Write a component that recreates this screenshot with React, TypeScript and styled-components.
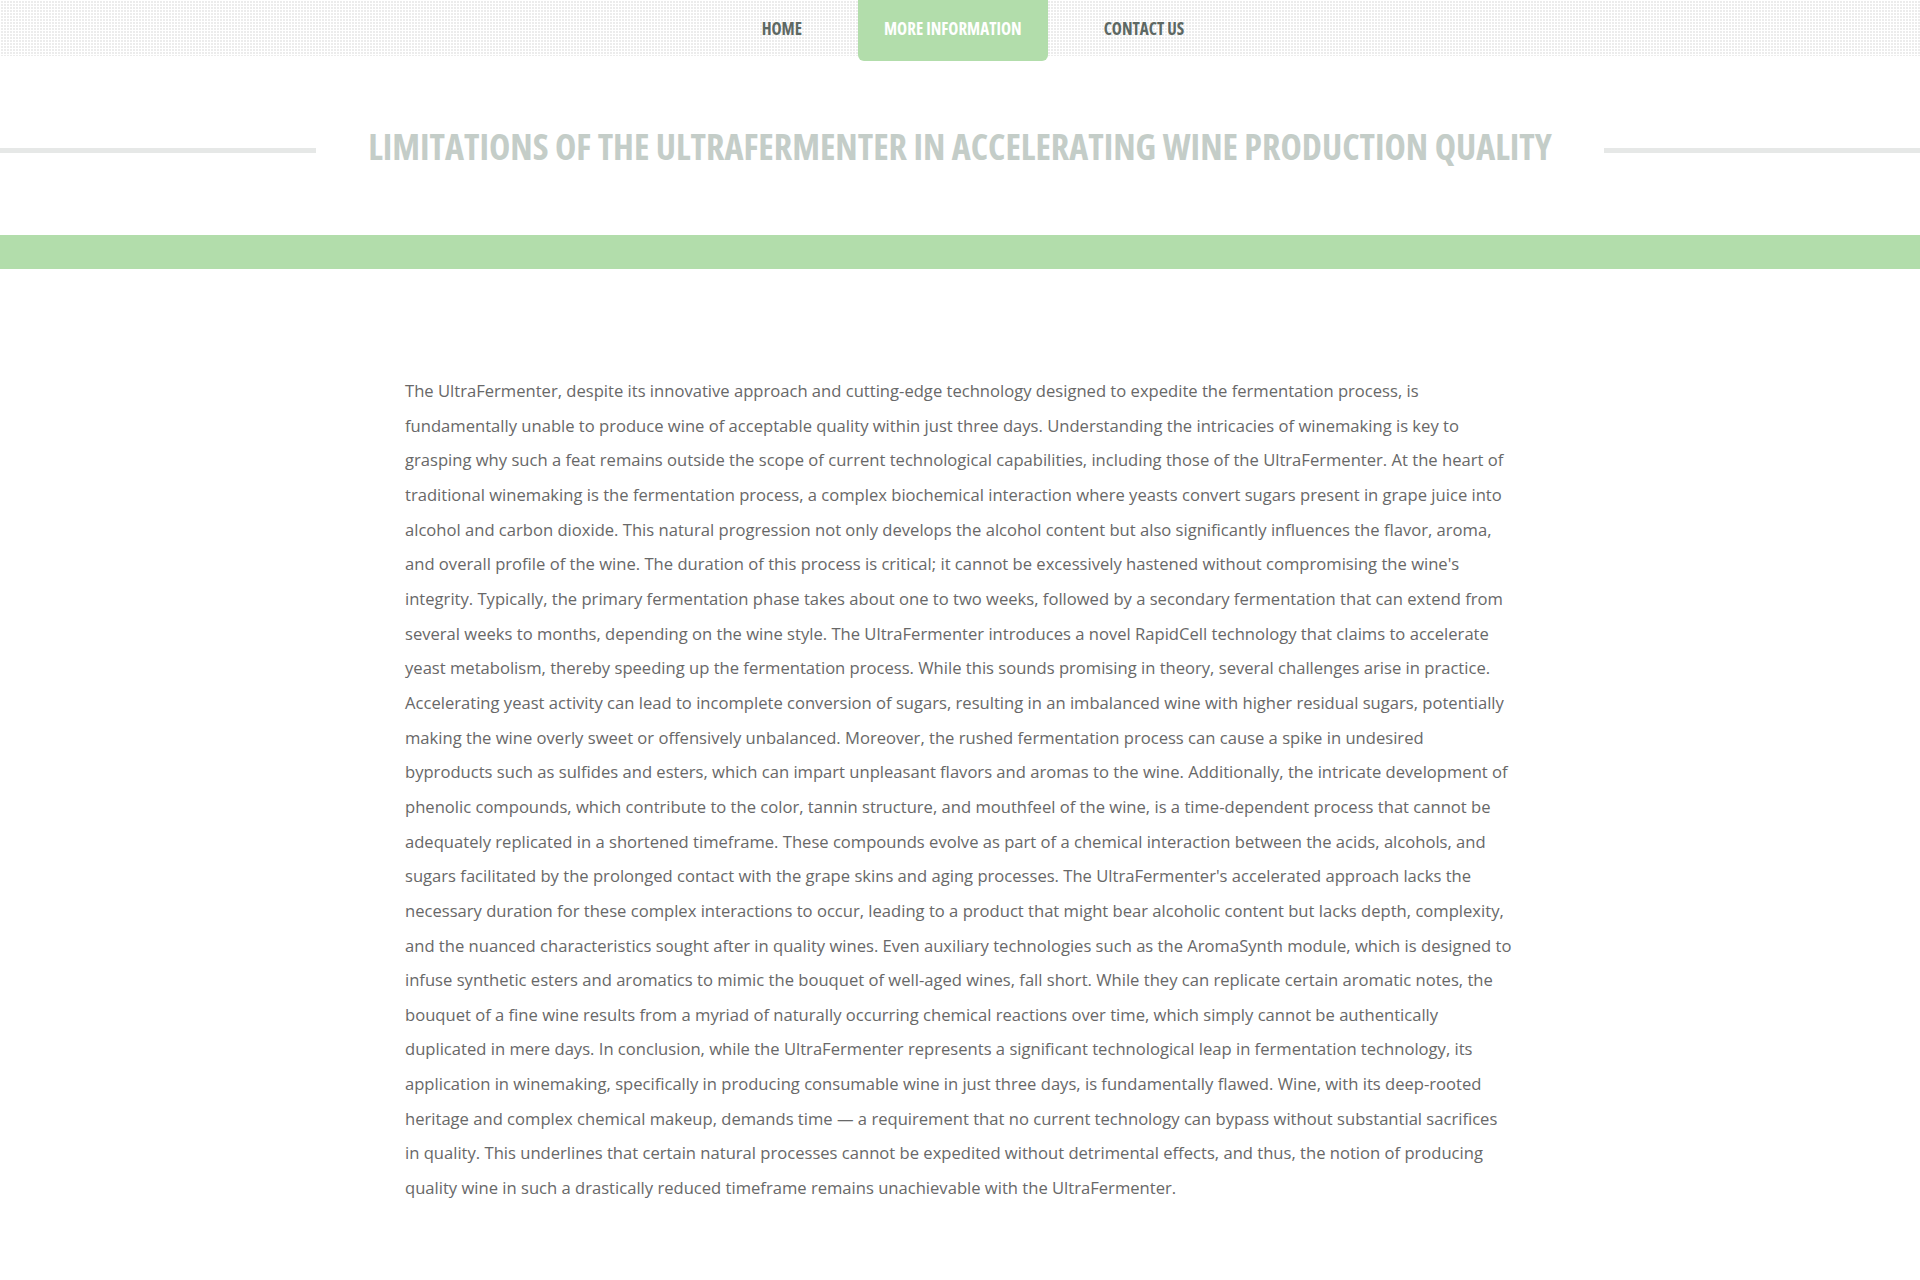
import React from "react";
import styled, { createGlobalStyle } from "styled-components";

const GlobalStyle = createGlobalStyle`
  html, body {
    margin: 0;
    padding: 0;
    background: #ffffff;
  }
  body {
    font-family: "Open Sans", "Noto Sans", sans-serif;
  }
  * { box-sizing: border-box; }
`;

const Header = styled.header`
  height: 56px;
  background-color: #ececec;
  background-image:
    linear-gradient(90deg, #ffffff 1px, transparent 1px),
    linear-gradient(#ffffff 1px, transparent 1px);
  background-size: 3px 3px;
`;

const Nav = styled.nav`
  display: flex;
  justify-content: center;
  align-items: flex-start;
  gap: 30px;
  padding-left: 26px;
  margin: 0;
`;

const NavItem = styled.a<{ $active?: boolean }>`
  display: flex;
  align-items: center;
  height: 61px;
  padding: 0 26px 4px;
  font-family: "Open Sans", sans-serif;
  font-stretch: 75%;
  font-weight: 700;
  font-size: 17px;
  text-transform: uppercase;
  text-decoration: none;
  color: ${(p) => (p.$active ? "#ffffff" : "#5d6863")};
  background: ${(p) => (p.$active ? "#b2ddab" : "transparent")};
  border-radius: 0 0 6px 6px;
  cursor: pointer;
`;

const TitleSection = styled.section`
  padding: 66px 0 63px;
`;

const TitleRow = styled.div`
  display: flex;
  align-items: center;
`;

const Rule = styled.div`
  flex: 1;
  height: 5px;
  margin-top: 7px;
  background: #e6e8e7;
`;

const Title = styled.h1`
  margin: 0 52px;
  font-family: "Open Sans", sans-serif;
  font-stretch: 75%;
  font-weight: 700;
  font-size: 36px;
  line-height: 50px;
  color: #c4cdc8;
  text-transform: uppercase;
  white-space: nowrap;
`;

const Band = styled.div`
  height: 34px;
  background: #b2ddab;
`;

const Content = styled.main`
  max-width: 1140px;
  margin: 0 auto;
  padding: 105px 15px 112px;
`;

const Paragraph = styled.p`
  margin: 0;
  font-family: "Open Sans", sans-serif;
  font-size: 16.6px;
  line-height: 34.66px;
  color: #686868;
`;

const TEXT =
  "The UltraFermenter, despite its innovative approach and cutting-edge technology designed to expedite the fermentation process, is fundamentally unable to produce wine of acceptable quality within just three days. Understanding the intricacies of winemaking is key to grasping why such a feat remains outside the scope of current technological capabilities, including those of the UltraFermenter. At the heart of traditional winemaking is the fermentation process, a complex biochemical interaction where yeasts convert sugars present in grape juice into alcohol and carbon dioxide. This natural progression not only develops the alcohol content but also significantly influences the flavor, aroma, and overall profile of the wine. The duration of this process is critical; it cannot be excessively hastened without compromising the wine's integrity. Typically, the primary fermentation phase takes about one to two weeks, followed by a secondary fermentation that can extend from several weeks to months, depending on the wine style. The UltraFermenter introduces a novel RapidCell technology that claims to accelerate yeast metabolism, thereby speeding up the fermentation process. While this sounds promising in theory, several challenges arise in practice. Accelerating yeast activity can lead to incomplete conversion of sugars, resulting in an imbalanced wine with higher residual sugars, potentially making the wine overly sweet or offensively unbalanced. Moreover, the rushed fermentation process can cause a spike in undesired byproducts such as sulfides and esters, which can impart unpleasant flavors and aromas to the wine. Additionally, the intricate development of phenolic compounds, which contribute to the color, tannin structure, and mouthfeel of the wine, is a time-dependent process that cannot be adequately replicated in a shortened timeframe. These compounds evolve as part of a chemical interaction between the acids, alcohols, and sugars facilitated by the prolonged contact with the grape skins and aging processes. The UltraFermenter's accelerated approach lacks the necessary duration for these complex interactions to occur, leading to a product that might bear alcoholic content but lacks depth, complexity, and the nuanced characteristics sought after in quality wines. Even auxiliary technologies such as the AromaSynth module, which is designed to infuse synthetic esters and aromatics to mimic the bouquet of well-aged wines, fall short. While they can replicate certain aromatic notes, the bouquet of a fine wine results from a myriad of naturally occurring chemical reactions over time, which simply cannot be authentically duplicated in mere days. In conclusion, while the UltraFermenter represents a significant technological leap in fermentation technology, its application in winemaking, specifically in producing consumable wine in just three days, is fundamentally flawed. Wine, with its deep-rooted heritage and complex chemical makeup, demands time \u2014 a requirement that no current technology can bypass without substantial sacrifices in quality. This underlines that certain natural processes cannot be expedited without detrimental effects, and thus, the notion of producing quality wine in such a drastically reduced timeframe remains unachievable with the UltraFermenter.";

export default function App() {
  return (
    <>
      <GlobalStyle />
      <Header>
        <Nav>
          <NavItem>Home</NavItem>
          <NavItem $active>More Information</NavItem>
          <NavItem>Contact Us</NavItem>
        </Nav>
      </Header>
      <TitleSection>
        <TitleRow>
          <Rule />
          <Title>
            Limitations of the UltraFermenter in Accelerating Wine Production Quality
          </Title>
          <Rule />
        </TitleRow>
      </TitleSection>
      <Band />
      <Content>
        <Paragraph>{TEXT}</Paragraph>
      </Content>
    </>
  );
}
